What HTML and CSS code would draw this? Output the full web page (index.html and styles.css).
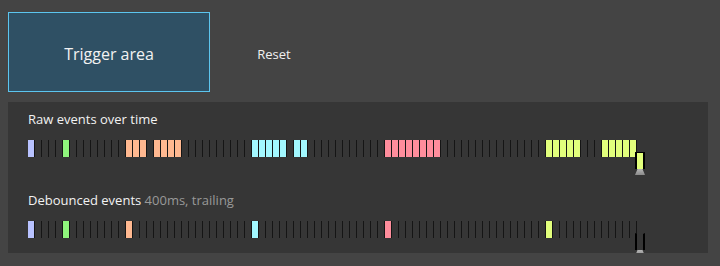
FILE: index.html
```html
<!DOCTYPE html>
<html>
<head>
<meta charset="utf-8">
<link rel="stylesheet" href="styles.css">
</head>
<body>
<div class="app">
  <div class="controls">
    <div class="trigger">Trigger area</div>
    <div class="reset">Reset</div>
  </div>
  <div class="panel">
    <div class="section">
      <div class="label">Raw events over time</div>
      <div class="row">
        <i class="s l"></i><i class="s"></i><i class="s"></i><i class="s"></i><i class="s"></i>
        <i class="s g"></i><i class="s"></i><i class="s"></i><i class="s"></i><i class="s"></i><i class="s"></i><i class="s"></i><i class="s"></i><i class="s"></i>
        <i class="s o"></i><i class="s o"></i><i class="s o"></i><i class="s"></i><i class="s o"></i><i class="s o"></i><i class="s o"></i><i class="s o"></i>
        <i class="s"></i><i class="s"></i><i class="s"></i><i class="s"></i><i class="s"></i><i class="s"></i><i class="s"></i><i class="s"></i><i class="s"></i><i class="s"></i>
        <i class="s c"></i><i class="s c"></i><i class="s c"></i><i class="s c"></i><i class="s c"></i><i class="s"></i><i class="s c"></i><i class="s c"></i>
        <i class="s"></i><i class="s"></i><i class="s"></i><i class="s"></i><i class="s"></i><i class="s"></i><i class="s"></i><i class="s"></i><i class="s"></i><i class="s"></i><i class="s"></i>
        <i class="s p"></i><i class="s p"></i><i class="s p"></i><i class="s p"></i><i class="s p"></i><i class="s p"></i><i class="s p"></i><i class="s p"></i>
        <i class="s"></i><i class="s"></i><i class="s"></i><i class="s"></i><i class="s"></i><i class="s"></i><i class="s"></i><i class="s"></i><i class="s"></i><i class="s"></i><i class="s"></i><i class="s"></i><i class="s"></i><i class="s"></i><i class="s"></i>
        <i class="s y"></i><i class="s y"></i><i class="s y"></i><i class="s y"></i><i class="s y"></i><i class="s"></i><i class="s"></i><i class="s"></i>
        <i class="s y"></i><i class="s y"></i><i class="s y"></i><i class="s y"></i><i class="s y"></i>
        <i class="cur y"></i>
      </div>
    </div>
    <div class="section">
      <div class="label">Debounced events <span class="muted">400ms, trailing</span></div>
      <div class="row">
        <i class="s l"></i><i class="s"></i><i class="s"></i><i class="s"></i><i class="s"></i>
        <i class="s g"></i><i class="s"></i><i class="s"></i><i class="s"></i><i class="s"></i><i class="s"></i><i class="s"></i><i class="s"></i><i class="s"></i>
        <i class="s o"></i><i class="s"></i><i class="s"></i><i class="s"></i><i class="s"></i><i class="s"></i><i class="s"></i><i class="s"></i><i class="s"></i><i class="s"></i><i class="s"></i><i class="s"></i><i class="s"></i><i class="s"></i><i class="s"></i><i class="s"></i><i class="s"></i><i class="s"></i>
        <i class="s c"></i><i class="s"></i><i class="s"></i><i class="s"></i><i class="s"></i><i class="s"></i><i class="s"></i><i class="s"></i><i class="s"></i><i class="s"></i><i class="s"></i><i class="s"></i><i class="s"></i><i class="s"></i><i class="s"></i><i class="s"></i><i class="s"></i><i class="s"></i><i class="s"></i>
        <i class="s p"></i><i class="s"></i><i class="s"></i><i class="s"></i><i class="s"></i><i class="s"></i><i class="s"></i><i class="s"></i><i class="s"></i><i class="s"></i><i class="s"></i><i class="s"></i><i class="s"></i><i class="s"></i><i class="s"></i><i class="s"></i><i class="s"></i><i class="s"></i><i class="s"></i><i class="s"></i><i class="s"></i><i class="s"></i><i class="s"></i>
        <i class="s y"></i><i class="s"></i><i class="s"></i><i class="s"></i><i class="s"></i><i class="s"></i><i class="s"></i><i class="s"></i><i class="s"></i><i class="s"></i><i class="s"></i><i class="s"></i><i class="s"></i>
        <i class="cur empty"></i>
      </div>
    </div>
  </div>
</div>
</body>
</html>
```

FILE: styles.css
```css
html, body {
  margin: 0;
  padding: 0;
  background: #444444;
  font-family: "Open Sans", "Noto Sans", sans-serif;
  color: #eeeeee;
  overflow: hidden;
}

.app {
  padding: 12px 0 0 8px;
}

.controls {
  display: flex;
  align-items: center;
}

.trigger {
  box-sizing: border-box;
  width: 202px;
  height: 80px;
  border: 1px solid #5cc5ee;
  background: #2f5064;
  display: flex;
  align-items: center;
  justify-content: center;
  font-size: 16px;
  padding-top: 4px;
  color: #f2f2f2;
}

.reset {
  width: 100px;
  margin-left: 14px;
  text-align: center;
  font-size: 13px;
  padding-top: 4px;
  color: #f0f0f0;
}

.panel {
  margin-top: 10px;
  width: 700px;
  height: 151px;
  box-sizing: border-box;
  background: #363636;
  padding: 7px 20px 0 20px;
}

.section + .section {
  margin-top: 33px;
}

.label {
  font-size: 13px;
  line-height: 20px;
  color: #f2f2f2;
  margin-bottom: 11px;
}

.muted {
  color: #999999;
}

.row {
  display: flex;
  align-items: flex-start;
  height: 17px;
}

.s {
  display: block;
  width: 6px;
  height: 17px;
  border-right: 1px solid #151515;
  flex: none;
}

.l { background: #b8c2ff; }
.g { background: #8ff57c; }
.o { background: #ffb890; }
.c { background: #a2f8ff; }
.p { background: #ff8d9c; }
.y { background: #e2ff7c; }

.cur {
  display: block;
  flex: none;
  position: relative;
  top: 12px;
  margin-left: -2px;
  width: 6px;
  height: 16px;
  border-left: 2px solid #000;
  border-right: 2px solid #000;
  border-top: 1px solid #000;
}

.cur.empty {
  border-top-color: transparent;
}

.cur::after {
  content: "";
  position: absolute;
  left: -2px;
  bottom: -6px;
  width: 10px;
  height: 6px;
  background: linear-gradient(#b5b5b5, #8a8a8a);
  clip-path: polygon(25% 0, 75% 0, 100% 100%, 0 100%);
}
```
